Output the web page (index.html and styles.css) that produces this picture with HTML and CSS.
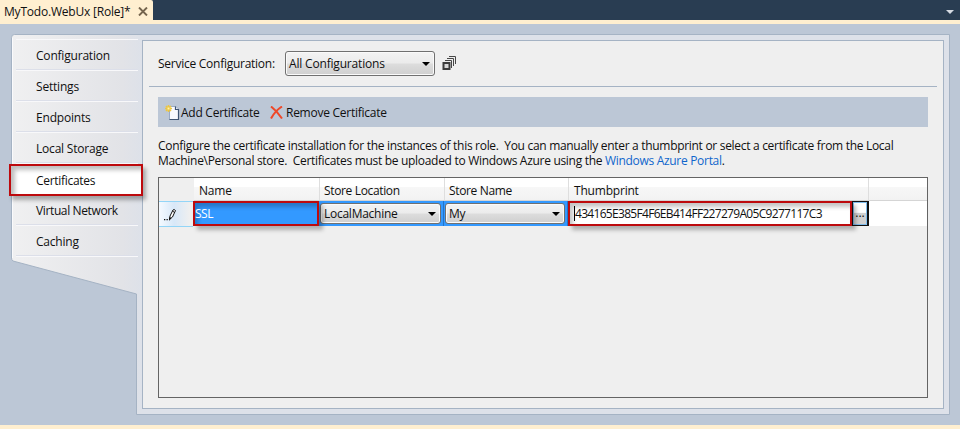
FILE: index.html
```html
<!DOCTYPE html>
<html lang="en">
<head>
<meta charset="utf-8">
<title>MyTodo.WebUx [Role]</title>
<link rel="stylesheet" href="styles.css">
</head>
<body>
<div class="window">
  <header class="tabbar">
    <div class="tab"><span class="tab-title">MyTodo.WebUx [Role]*</span>
      <svg class="close" width="10" height="9" viewBox="0 0 10 9"><path d="M1 .5 9 8.5M9 .5 1 8.5" stroke="#75654e" stroke-width="1.9" fill="none"/></svg>
    </div>
    <svg class="tab-menu" width="8" height="4" viewBox="0 0 8 4"><path d="M0 0h8L4 4z" fill="#d5dbe3"/></svg>
  </header>
  <main class="editor">
    <svg class="frame" width="960" height="401" viewBox="0 24 960 401">
      <defs><linearGradient id="side" gradientUnits="userSpaceOnUse" x1="11" y1="0" x2="142" y2="0"><stop offset="0" stop-color="#f0f0f1"/><stop offset=".85" stop-color="#e2e3e7"/><stop offset="1" stop-color="#dde1e9"/></linearGradient></defs>
      <path d="M14.500 34.500H949.500V414.500H136.500V294L13 261Q11.500 260 11.500 258V37.500Q11.500 34.500 14.500 34.500Z" fill="url(#side)" stroke="#a5b3c4"/>
      <path d="M12.500 258V38" stroke="#fafafc"/>
    </svg>
    <nav class="side">
      <a class="item">Configuration</a>
      <a class="item">Settings</a>
      <a class="item">Endpoints</a>
      <a class="item">Local Storage</a>
      <a class="item active">Certificates</a>
      <a class="item network">Virtual Network</a>
      <a class="item">Caching</a>
    </nav>
    <section class="panel">
      <div class="service">
        <span class="service-label">Service Configuration:</span>
        <div class="select service-select"><span>All Configurations</span><i class="arrow"></i></div>
        <svg class="stack" width="14" height="14" viewBox="0 0 14 14"><path d="M3 3.500H9.500V11M5 1.500H11.500V9M7 -.5H13.500V7" fill="none" stroke="#484848"/><path d="M1.500 6H7.500V12H1.500Z" fill="#d8d8d8" stroke="#3c3c3c" stroke-width="2"/></svg>
      </div>
      <div class="toolbar">
        <svg class="add-icon" width="15" height="15" viewBox="0 0 15 15"><path d="M4.500 1.500H11L13.500 4V14.500H4.500Z" fill="#f8faff" stroke="#9aabc4"/><path d="M13.500 4V14.500H4.500M10.500 1.500V4.500H13.500" fill="none" stroke="#3f5573" stroke-width="1.200"/><path d="M3.500 0V7M0 3.500H7M1 1 6 6M6 1 1 6" stroke="#edc642" stroke-width="1.500"/><path d="M2.500 2.500h2v2h-2z" fill="#fff3a8"/></svg>
        <span class="add-label">Add Certificate</span>
        <svg class="remove-icon" width="13" height="13" viewBox="0 0 13 13"><path d="M1 .5Q7 5 12 12.500M12 .5Q5 5 1 12.500" fill="none" stroke="#ee4828" stroke-width="2"/></svg>
        <span class="remove-label">Remove Certificate</span>
      </div>
      <div class="description">
        <div class="line-one">Configure the certificate installation for the instances of this role.&nbsp; You can manually enter a thumbprint or select a certificate from the Local</div>
        <div class="line-two">Machine\Personal store.&nbsp; Certificates must be uploaded to Windows Azure using the <a class="link">Windows Azure Portal</a>.</div>
      </div>
      <div class="grid">
        <div class="row head">
          <div class="corner"></div><div class="th">Name</div><div class="th">Store Location</div><div class="th">Store Name</div><div class="th">Thumbprint</div><div class="th"></div>
        </div>
        <div class="row data">
          <div class="edit"><svg width="13" height="14" viewBox="0 0 13 14"><path d="M5.500 11.500 6 8 9 2Q10 .8 11.500 2.500L8.500 9ZM8.500 3 10.500 4.500" fill="#fff" stroke="#111"/><path d="M5 9.500h2.500L5.500 12.500H5zM0 11h1.300v1.300H0zM2.500 11h1.300v1.300H2.500z" fill="#111"/></svg></div>
          <div class="name marked">SSL</div>
          <div class="cell"><div class="select"><span class="location">LocalMachine</span><i class="arrow"></i></div></div>
          <div class="cell"><div class="select"><span>My</span><i class="arrow"></i></div></div>
          <div class="thumb marked"><span class="caret"></span><span class="hash">434165E385F4F6EB414FF227279A05C9277117C3</span></div>
          <div class="browse">...</div>
          <div class="rest"></div>
        </div>
      </div>
    </section>
  </main>
</div>
</body>
</html>
```
FILE: styles.css
```css
* { box-sizing: border-box; }
body { margin: 0; font: 12px/15px "Open Sans", "Noto Sans", sans-serif; letter-spacing: -.26px; color: #101010; }
.window { width: 960px; height: 429px; display: flex; flex-direction: column; background: #ffefd0; overflow: hidden; }
.tabbar { height: 24px; display: flex; justify-content: space-between; background: #293d52; border-bottom: 4px solid #ffefd0; }
.tab { width: 153px; height: 20px; display: flex; align-items: center; padding: 2px 5px 0 4px; justify-content: space-between; background: #ffefd0; border-radius: 0 2px 0 0; white-space: nowrap; }
.tab-title { letter-spacing: -.2px; }
.close { flex: none; }
.tab-menu { margin: 10px 6px 0 0; }
.editor { position: relative; height: 401px; display: flex; background: #bcc7d6; }
.frame { position: absolute; inset: 0; }
.side { position: relative; z-index: 2; width: 142px; padding-top: 15px; }
.item { display: flex; align-items: center; height: 31px; margin: 0 4px 0 16px; padding: 0 0 0 20px; border-bottom: 1px solid #f8f8fa; box-shadow: 0 -1px #dcdfe9 inset; letter-spacing: -.2px; white-space: nowrap; }
.item:first-child { height: 32px; border-top: 1px solid #f8f8fa; }
.item.active { width: 134px; height: 32px; margin: 0 0 -1px 9px; padding-left: 25px; border: 2px solid #bd0a0d; background: #fff; letter-spacing: -.3px; box-shadow: 3px 4px 4px rgba(0,0,0,.3), inset 4px 4px 4px rgba(0,0,0,.25); }
.item.network { letter-spacing: -.37px; }
.panel { position: relative; width: 802px; height: 369px; margin-top: 16px; border: 1px solid #a5b3c4; background: #efefef; padding: 0 15px; }
.service { height: 46px; margin: 0 -9px; padding: 0 9px; display: flex; align-items: center; border-bottom: 1px solid #a5b3c4; }
.service-label { width: 127px; white-space: nowrap; }
.select { position: relative; display: flex; align-items: center; justify-content: space-between; padding: 0 4px 0 3px; border: 1px solid #707070; border-radius: 3px; background: linear-gradient(#f3f3f3, #ebebeb 49%, #dddddd 51%, #cfcfcf); box-shadow: inset 0 0 0 1px #fafafa; white-space: nowrap; }
.service-select { width: 150px; height: 25px; letter-spacing: -.18px; }
.arrow { border: 4px solid transparent; border-top-color: #000; border-bottom: 0; }
.stack { margin-left: 7px; overflow: visible; }
.toolbar { height: 30px; margin-top: 10px; display: flex; align-items: center; padding: 1px 0 0 7px; background: #bcc7d6; white-space: nowrap; }
.add-label { width: 89px; margin-left: 1px; }
.remove-label { margin-left: 3px; }
.description { margin-top: 11px; letter-spacing: -.303px; white-space: nowrap; }
.link { color: #0f66cc; }
.grid { height: 221px; margin-top: 9px; border: 1px solid #646464; }
.row { display: grid; height: 23px; }
.head { grid-template-columns: 35px 126px 125px 124px 300px 1fr; }
.th { padding: 5px 0 0 4px; letter-spacing: -.35px; background: linear-gradient(#fff 40%, #f7f7f7 42%, #f2f2f2); border-right: 1px solid #dedede; border-bottom: 1px solid #d5d5d5; }
.th:nth-child(2), .th:nth-child(5) { padding-left: 5px; letter-spacing: -.2px; }
.th:last-child { border-right: 0; }
.corner { background: #efefef; }
.data { height: 25px; grid-template-columns: 34px 126px 125px 124px 284px 17px 1fr; border-bottom: 1px solid #646464; }
.edit { padding: 6px 0 0 5px; border: 1px solid #93d5f7; border-width: 1px 0; margin-bottom: -1px; background: linear-gradient(90deg, #f5faff, #d8e8f8 45%, #efefef 90%); }
.edit svg { display: block; }
.marked { position: relative; z-index: 2; height: 25px; border: 2px solid #bd0a0d; box-shadow: 4px 4px 4px rgba(0,0,0,.27), inset 3px 4px 4px rgba(0,0,0,.23); }
.name { background-color: #3399ff; color: #fff; padding: 3px 0 0 0; letter-spacing: -.5px; }
.cell { padding: 2px 2px 1px 1px; background: #3399ff; border-right: 1px solid #2474c8; }
.cell .select { height: 21px; }
.thumb { display: flex; align-items: center; background-color: #fff; padding-left: 4px; }
.caret { width: 1px; height: 15px; background: #000; }
.hash { letter-spacing: -.69px; }
.browse { border: 1px solid #111; border-width: 1px 2px 1px 1px; background: linear-gradient(#fff 45%, #d0d0d0 50%); text-align: center; line-height: 22px; letter-spacing: 0; box-shadow: inset 0 0 0 1px #80bceb; }
.rest { background: #fff; }
```
